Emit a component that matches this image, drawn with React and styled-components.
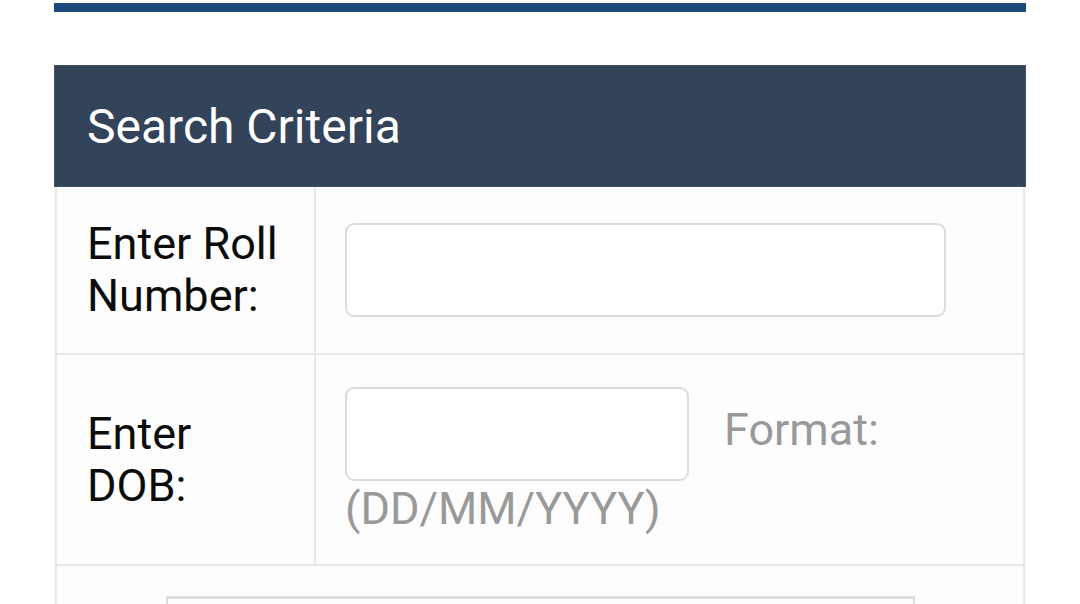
import styled, { createGlobalStyle } from 'styled-components'

const GlobalStyle = createGlobalStyle`
  body {
    margin: 0;
    background: #ffffff;
    font-family: Roboto, "Noto Sans", sans-serif;
  }
`

const Page = styled.div`
  padding: 3px 54px 0;
`

const TopBar = styled.div`
  height: 9px;
  background: #1b4a7c;
`

const Panel = styled.div`
  margin-top: 53px;
`

const Heading = styled.div`
  box-sizing: border-box;
  height: 122px;
  display: flex;
  align-items: center;
  padding: 2px 32px 0;
  background: #334359;
  border: 1px solid #3e4e64;
  color: #ffffff;
  font-size: 48px;
  line-height: 1;
`

const Table = styled.div`
  display: grid;
  grid-template-columns: 259px 1fr;
  border-left: 2px solid #e8e8e8;
  border-right: 2px solid #e8e8e8;
  margin: 0 1px;
  background: #fdfdfd;
`

const Label = styled.div`
  display: flex;
  align-items: center;
  height: ${p => p.$h}px;
  padding: 0 31px 0 30px;
  border-right: 2px solid #e8e8e8;
  border-bottom: 2px solid #e8e8e8;
  font-size: 45px;
  line-height: 52px;
  color: #0c0c0c;
`

const Field = styled.div`
  display: flex;
  align-items: ${p => (p.$top ? 'flex-start' : 'center')};
  height: ${p => p.$h}px;
  padding: ${p => (p.$top ? '32px' : '0')} 29px 0;
  box-sizing: border-box;
  border-bottom: 2px solid #e8e8e8;
`

const Input = styled.input`
  box-sizing: border-box;
  width: ${p => p.$w}px;
  height: 94px;
  margin: 0;
  border: 2px solid #dcdcdc;
  border-radius: 9px;
  background: #ffffff;
  font: inherit;
  outline: none;
`

const DobBox = styled.div`
  font-size: 45px;
  line-height: 52px;
  color: #999999;
`

const DobRow = styled.div`
  display: flex;
  align-items: center;
`

const Format = styled.span`
  margin-left: 35px;
  margin-top: -8px;
`

const Hint = styled.div`
  margin-top: 2px;
`

const Wide = styled.div`
  grid-column: 1 / span 2;
  display: flex;
  justify-content: center;
  padding-top: 30px;
  height: 40px;
`

const Captcha = styled.div`
  width: 749px;
  height: 40px;
  border-top: 3px solid #dedede;
  border-left: 2px solid #dedede;
  border-right: 2px solid #dedede;
  box-sizing: border-box;
`

export default function App() {
  return (
    <Page>
      <GlobalStyle />
      <TopBar />
      <Panel>
        <Heading>Search Criteria</Heading>
        <Table>
          <Label $h={166}>Enter Roll Number:</Label>
          <Field $h={168}>
            <Input $w={601} type="text" />
          </Field>
          <Label $h={209}>Enter DOB:</Label>
          <Field $h={211} $top>
            <DobBox>
              <DobRow>
                <Input $w={344} type="text" />
                <Format>Format:</Format>
              </DobRow>
              <Hint>(DD/MM/YYYY)</Hint>
            </DobBox>
          </Field>
          <Wide>
            <Captcha />
          </Wide>
        </Table>
      </Panel>
    </Page>
  )
}
